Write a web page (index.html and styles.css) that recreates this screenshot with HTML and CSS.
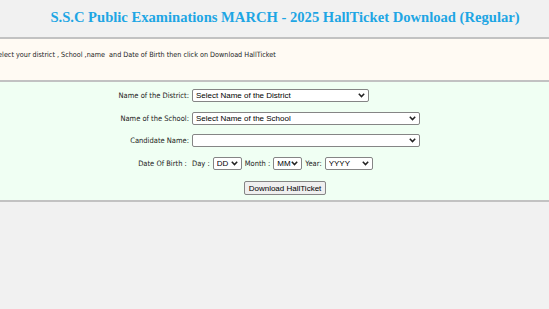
FILE: index.html
```html
<!DOCTYPE html>
<html lang="en">
<head>
    <meta charset="UTF-8">
    <meta name="viewport" content="width=device-width, initial-scale=1.0">
    <title>SSC Hall Ticket Download</title>
    <link rel="stylesheet" href="styles.css">
</head>
<body>
    <div class="header">
        <h1>S.S.C Public Examinations MARCH - 2025 HallTicket Download (Regular)</h1>
    </div>

    <div class="note">
        <p>Select your district , School ,name&nbsp; and Date of Birth then click on Download HallTicket</p>
    </div>

    <div class="form-section">
        <div class="form-grid">
            <label class="lbl" for="district">Name of the District:</label>
            <div class="field">
                <select id="district" class="sel-district">
                    <option>Select Name of the District</option>
                </select>
            </div>

            <label class="lbl" for="school">Name of the School:</label>
            <div class="field">
                <select id="school" class="sel-wide">
                    <option>Select Name of the School</option>
                </select>
            </div>

            <label class="lbl" for="cand">Candidate Name:</label>
            <div class="field">
                <select id="cand" class="sel-wide">
                    <option></option>
                </select>
            </div>

            <span class="lbl">Date Of Birth :&nbsp;</span>
            <div class="field dob">
                <span>Day :</span>
                <select class="sel-dd"><option>DD</option></select>
                <span>Month :</span>
                <select class="sel-mm"><option>MM</option></select>
                <span>Year:</span>
                <select class="sel-yy"><option>YYYY</option></select>
            </div>
        </div>

        <div class="actions">
            <button type="button" class="btn">Download HallTicket</button>
        </div>
    </div>

    <div class="footer"></div>
</body>
</html>
```

FILE: styles.css
```css
html, body {
    margin: 0;
    padding: 0;
    overflow: hidden;
}
body {
    background-color: #f1f1f1;
    font-family: "DejaVu Sans Condensed", "DejaVu Sans", Verdana, sans-serif;
    font-size: 7.5px;
    color: #222;
}
.header {
    height: 37px;
    border-bottom: 2px solid #c2c2c2;
    background: #f1f1f1;
    text-align: center;
    padding-left: 21px;
}
.header h1 {
    margin: 0;
    padding-top: 9px;
    font-family: "Liberation Serif", "Times New Roman", serif;
    font-weight: bold;
    font-size: 14.6px;
    color: #1ea6e4;
    white-space: nowrap;
}
.note {
    background: #fffaf3;
    height: 41px;
    border-bottom: 2px solid #c2c2c2;
}
.note p {
    margin: 0;
    padding-top: 11px;
    text-indent: -6px;
    font-size: 7.2px;
    white-space: nowrap;
}
.form-section {
    background: #f0fff3;
    border-bottom: 2px solid #c2c2c2;
    padding: 7px 0 5px;
}
.form-grid {
    display: grid;
    grid-template-columns: 189px auto;
    column-gap: 3px;
    row-gap: 9.7px;
    align-items: center;
}
.lbl {
    text-align: right;
    white-space: nowrap;
}
.field {
    display: flex;
    align-items: center;
    gap: 3px;
}
select {
    appearance: none;
    -webkit-appearance: none;
    font-family: "Liberation Sans", Arial, sans-serif;
    font-size: 8px;
    height: 13px;
    padding: 0 0 0 3px;
    border: 1px solid #858585;
    border-radius: 2px;
    background-color: #fff;
    background-image: url("data:image/svg+xml,%3Csvg xmlns='http://www.w3.org/2000/svg' width='7' height='5' viewBox='0 0 7 5'%3E%3Cpath d='M0.8 0.8 L3.5 3.6 L6.2 0.8' fill='none' stroke='%23222' stroke-width='1.5'/%3E%3C/svg%3E");
    background-repeat: no-repeat;
    background-position: right 3px center;
    color: #000;
    margin: 0;
}
.sel-district { width: 177px; }
.sel-wide { width: 228px; }
.sel-dd { width: 29px; }
.sel-mm { width: 29px; }
.sel-yy { width: 48px; }
.actions {
    display: flex;
    justify-content: center;
    padding-left: 21px;
    margin-top: 11px;
}
.btn {
    font-family: "Liberation Sans", Arial, sans-serif;
    font-size: 8px;
    height: 14px;
    padding: 0 4px;
    border: 1px solid #858585;
    border-radius: 2px;
    background: #efefef;
    color: #000;
}
.footer {
    height: 120px;
}
```
